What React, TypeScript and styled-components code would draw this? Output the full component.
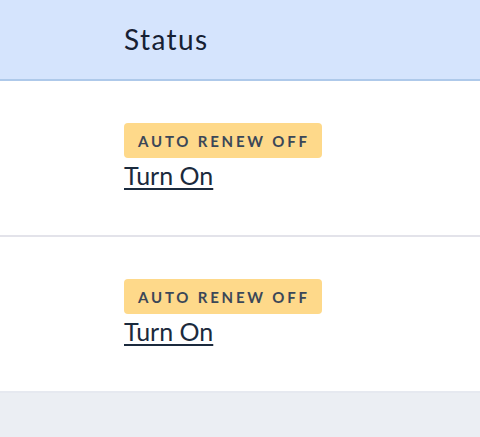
import React, { FC } from 'react';
import styled, { createGlobalStyle } from 'styled-components';

const GlobalStyle = createGlobalStyle`
	html, body {
		margin: 0;
		padding: 0;
		background: #ebeef3;
	}
	body {
		font-family: Lato, 'Noto Sans', sans-serif;
	}
`;

const Table = styled.div`
	width: 480px;
	display: flex;
	flex-direction: column;
`;

const Header = styled.div`
	height: 81px;
	display: flex;
	align-items: center;
	padding-left: 124px;
	box-sizing: border-box;
	background: #d5e4fd;
	border-bottom: 2px solid #aec9ea;
`;

const HeaderTitle = styled.h3`
	margin: 0 0 2px;
	font-weight: 400;
	font-size: 28px;
	color: #162033;
	letter-spacing: 1.4px;
`;

const Row = styled.div<{ $last?: boolean }>`
	height: 156px;
	box-sizing: border-box;
	background: #ffffff;
	padding: 42px 0 0 124px;
	display: flex;
	flex-direction: column;
	align-items: flex-start;
	border-bottom: 2px solid ${p => (p.$last ? '#e6e9f0' : '#e3e3ea')};
`;

const Badge = styled.span`
	height: 35px;
	padding: 0 12px 0 14px;
	display: inline-flex;
	align-items: center;
	box-sizing: border-box;
	border-radius: 4px;
	background: #fed98a;
	color: #3b4758;
	font-size: 15px;
	font-weight: 700;
	letter-spacing: 2.8px;
`;

const Link = styled.a`
	margin-top: 2px;
	font-size: 25px;
	line-height: 30px;
	color: #1b2a3d;
	text-decoration: underline;
	text-decoration-thickness: 2px;
	text-underline-offset: 3px;
	cursor: pointer;
`;

type Subscription = {
	id: number
	status: string
	action: string
}

const subscriptions: Subscription[] = [
	{ id: 1, status: 'AUTO RENEW OFF', action: 'Turn On' },
	{ id: 2, status: 'AUTO RENEW OFF', action: 'Turn On' },
];

const App: FC = () => {
	return (
		<>
			<GlobalStyle />
			<Table>
				<Header>
					<HeaderTitle>Status</HeaderTitle>
				</Header>
				{subscriptions.map((item, i) =>
					<Row key={item.id} $last={i === subscriptions.length - 1}>
						<Badge>{item.status}</Badge>
						<Link>{item.action}</Link>
					</Row>
				)}
			</Table>
		</>
	);
};

export default App;
